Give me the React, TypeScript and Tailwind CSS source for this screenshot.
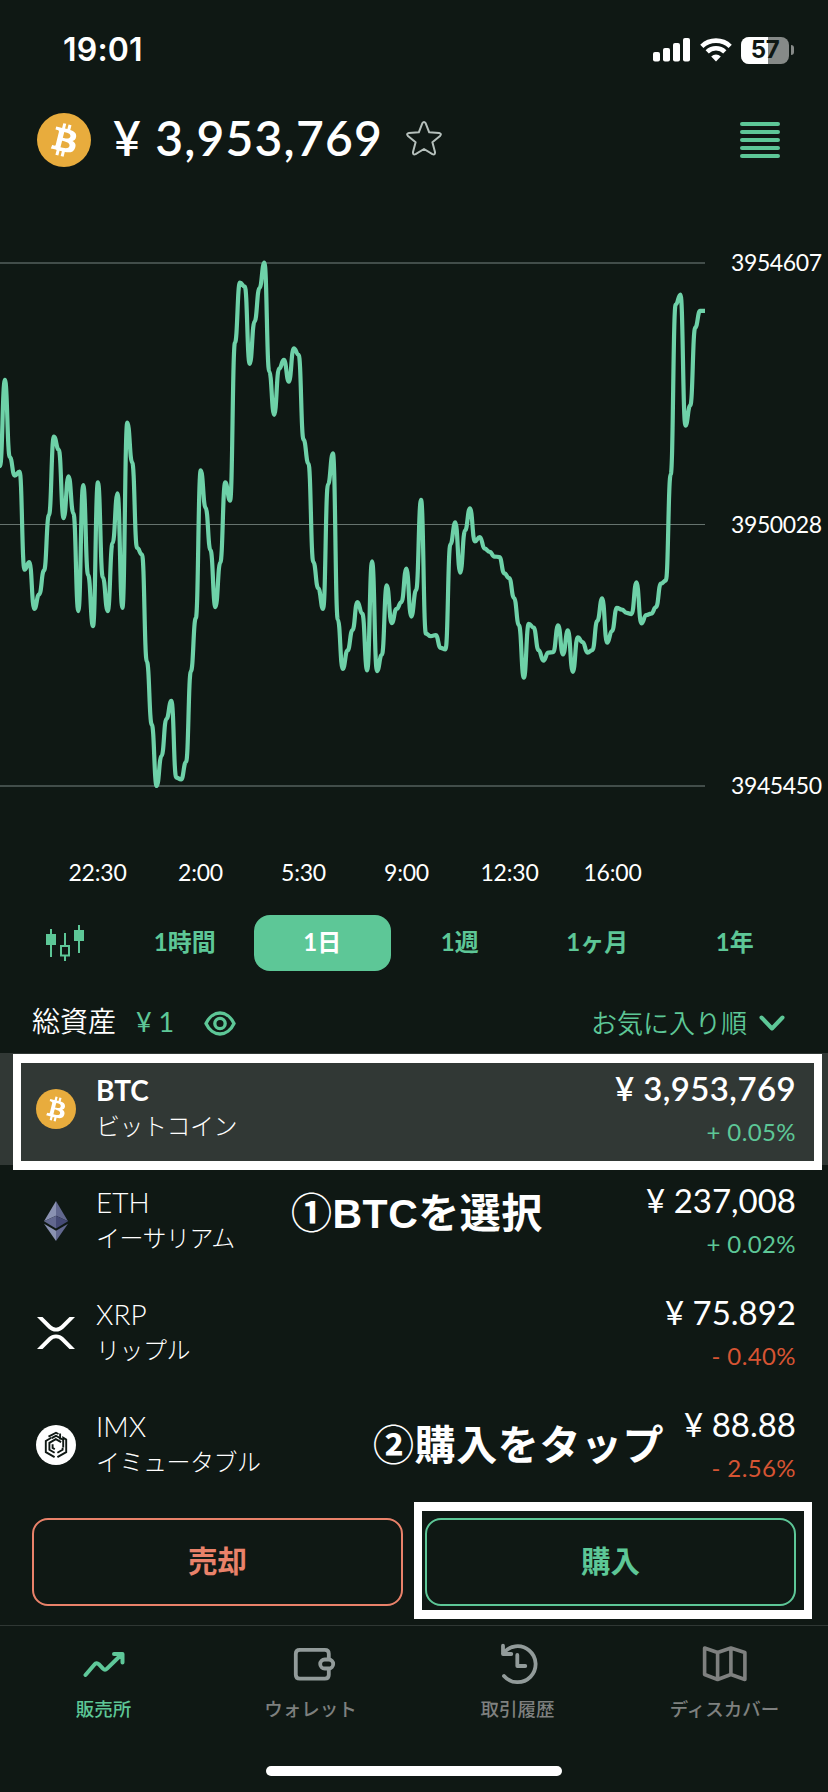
import React from 'react';

// one sample every ten minutes, measured down from the top of the plot
const SAMPLES = [
  622, 385, 597, 648, 637, 907, 886, 1015, 975, 909, 757, 541, 577, 765, 650, 752, 1021, 674, 922, 1062,
  667, 928, 1021, 834, 697, 1012, 502, 612, 847, 865, 1160, 1333, 1502, 1419, 1317, 1268, 1479, 1484, 1436, 1186,
  1040, 634, 737, 854, 1010, 887, 667, 717, 282, 117, 128, 341, 224, 132, 62, 362, 481, 354, 330, 390,
  298, 316, 549, 615, 886, 958, 1015, 672, 587, 1044, 1180, 1129, 1073, 996, 1028, 1184, 884, 1186, 1141, 950,
  1054, 1015, 996, 904, 1036, 963, 715, 1083, 1090, 1087, 1122, 1126, 837, 777, 915, 799, 738, 829, 817, 849,
  858, 871, 872, 917, 930, 985, 1060, 1204, 1056, 1066, 1128, 1157, 1135, 1134, 1060, 1140, 1074, 1188, 1093, 1106,
  1135, 1128, 1048, 986, 1108, 1076, 1012, 1017, 1026, 1029, 942, 1055, 1032, 1028, 1010, 945, 937, 645, 178, 150,
  511, 455, 241, 195, 195,
];

const STEP = 705 / 144;
const SCALE = 2.751;

const linePath = SAMPLES.map((v, i) => {
  const x = i * STEP;
  const y = v / SCALE;
  if (i === 0) return `M${x} ${y}`;
  const mid = x - STEP / 2;
  return `C${mid} ${SAMPLES[i - 1] / SCALE} ${mid} ${y} ${x} ${y}`;
}).join('');

const TIMES = ['22:30', '2:00', '5:30', '9:00', '12:30', '16:00'];
const PRICES = ['3954607', '3950028', '3945450'];
const RANGES = ['1時間', '1日', '1週', '1ヶ月', '1年'];

const BtcIcon = ({ className }: { className: string }) => (
  <svg viewBox="0 0 32 32" className={className}>
    <circle cx="16" cy="16" r="16" fill="#e8ac3d" />
    <path
      fill="#fff"
      d="M23.189 14.02c.314-2.096-1.283-3.223-3.465-3.975l.708-2.84-1.728-.43-.69 2.765c-.454-.114-.92-.22-1.385-.326l.695-2.783L15.596 6l-.708 2.839c-.376-.086-.746-.17-1.104-.26l.002-.009-2.384-.595-.46 1.846s1.283.294 1.256.312c.7.175.826.638.805 1.006l-.806 3.235c.048.012.11.03.18.057l-.183-.045-1.13 4.532c-.086.212-.303.531-.793.41.018.025-1.256-.313-1.256-.313l-.858 1.978 2.25.561c.418.105.828.215 1.231.318l-.715 2.872 1.727.43.708-2.84c.472.127.93.245 1.378.357l-.706 2.828 1.728.43.715-2.866c2.948.558 5.164.333 6.097-2.333.752-2.146-.037-3.385-1.588-4.192 1.13-.26 1.98-1.003 2.207-2.538zm-3.95 5.538c-.533 2.147-4.148.986-5.32.695l.95-3.805c1.172.293 4.929.872 4.37 3.11zm.535-5.569c-.487 1.953-3.495.96-4.47.717l.86-3.45c.975.243 4.118.696 3.61 2.733z"
    />
  </svg>
);

const EthIcon = () => (
  <svg viewBox="0 0 24 40" className="h-10 w-6">
    <path fill="#8a92b2" d="M12 0v14.8L0 20.3z" />
    <path fill="#62688f" d="M12 0v14.8l12 5.5z" />
    <path fill="#62688f" d="M12 14.8v12.6L0 20.3z" />
    <path fill="#454a75" d="M12 14.8v12.6l12-7.1z" />
    <path fill="#8a92b2" d="M12 29.8V40L0 22.7z" />
    <path fill="#62688f" d="M12 29.8V40l12-17.3z" />
  </svg>
);

const XrpIcon = () => (
  <svg viewBox="0 0 38 32" className="h-8 w-[38px]">
    <path fill="#fff" d="M0 0h5.5l8.6 8.6a6.9 6.9 0 0 0 9.8 0L32.5 0H38L26.6 11.4a10.8 10.8 0 0 1-15.2 0z" />
    <path fill="#fff" d="M0 32h5.5l8.6-8.6a6.9 6.9 0 0 1 9.8 0l8.6 8.6H38L26.6 20.6a10.8 10.8 0 0 0-15.2 0z" />
  </svg>
);

const ImxIcon = () => (
  <svg viewBox="0 0 40 40" className="size-10">
    <circle cx="20" cy="20" r="20" fill="#fff" />
    <g fill="none" stroke="#0f1814" strokeWidth="1.9">
      <path d="M18.6 32.2l-8.8-5V16l5.5-3.2" />
      <path d="M18.6 27.7l-5.2-3v-6.800l6.400-3.700 5.300 3" />
      <path d="M21.4 32.2l8.8-5V14.600l-3-1.800v9.700" />
      <path d="M12.5 11.700L20 7.700 22.500 9" />
      <path d="M15.6 13.200l4.400-2.400 7 4" />
      <path d="M21.4 27.700l5.200-3v-2" />
      <path d="M18.8 24.200l-2.200-1.300v-3.600" />
      <path d="M24.1 8.500v6" />
    </g>
  </svg>
);

const COINS = [
  { code: 'BTC', name: 'ビットコイン', price: '3,953,769', change: '+ 0.05%', icon: <BtcIcon className="size-10" />, selected: true },
  { code: 'ETH', name: 'イーサリアム', price: '237,008', change: '+ 0.02%', icon: <EthIcon /> },
  { code: 'XRP', name: 'リップル', price: '75.892', change: '- 0.40%', icon: <XrpIcon /> },
  { code: 'IMX', name: 'イミュータブル', price: '88.88', change: '- 2.56%', icon: <ImxIcon /> },
];

const StatusBar = () => (
  <div className="flex h-25 items-center justify-between pl-[63px] pr-[34px]">
    <span className="font-['Inter',sans-serif] text-[32px] font-semibold tracking-[0.2px]">19:01</span>
    <div className="flex items-center">
      <svg viewBox="0 0 38 24" className="h-6 w-[38px]" fill="#fff">
        <rect x="0" y="14" width="7" height="9.5" rx="2" />
        <rect x="10" y="10" width="7" height="13.5" rx="2" />
        <rect x="20" y="5" width="7" height="18.5" rx="2" />
        <rect x="30" y="0" width="7" height="23.5" rx="2" />
      </svg>
      <svg viewBox="0 0 32 24" className="ml-[9px] h-6 w-8" fill="none" stroke="#fff" strokeWidth="4.6">
        <path d="M1.8 8.3a20.5 20.5 0 0 1 28.4 0" />
        <path d="M7.2 13.8a12.7 12.7 0 0 1 17.6 0" />
        <path d="M16 23.5l-4.800-5a7 7 0 0 1 9.600 0z" fill="#fff" stroke="none" />
      </svg>
      <div className="relative ml-[9px] flex h-[27px] w-12 items-center justify-center overflow-hidden rounded-[8px] bg-[#868a88]">
        <div className="absolute inset-y-0 left-0 w-[27px] bg-white" />
        <span className="relative font-['Inter',sans-serif] text-[24px] font-bold leading-none tracking-[-0.5px] text-[#0f1814]">57</span>
      </div>
      <div className="ml-0.5 h-2.5 w-[3px] rounded-r-full bg-[#868a88]" />
    </div>
  </div>
);

const Chart = () => (
  <div className="mt-[60px] flex h-[570px]">
    <svg viewBox="0 0 705 570" className="h-[570px] w-[705px] shrink-0">
      <path d="M0 23H705M0 546H705" stroke="#424d4a" strokeWidth="2" />
      <path d="M0 284.5H705" stroke="#66736e" strokeWidth="1" />
      <path d={linePath} fill="none" stroke="#6ed1a8" strokeWidth="4.200" strokeLinejoin="round" />
    </svg>
    <div className="flex flex-col justify-between pb-[10px] pl-[26px] pt-[7px] text-[23px] leading-[30px] tracking-[-0.4px]">
      {PRICES.map((p) => (
        <span key={p}>{p}</span>
      ))}
    </div>
  </div>
);

const NAV = [
  {
    label: '販売所',
    color: 'text-[#5dc797]',
    icon: (
      <svg viewBox="0 0 42 42" className="size-[42px]" fill="none" stroke="#5ec799" strokeWidth="4" strokeLinecap="round" strokeLinejoin="round">
        <path d="M2.5 32l9-10.500q2-2.500 4.300-.3l4.200 4.500q2 2 4 0L39 11M31 11h8.500v8.500" />
      </svg>
    ),
  },
  {
    label: 'ウォレット',
    color: 'text-[#7e807f]',
    icon: (
      <svg viewBox="0 0 42 42" className="size-[42px] overflow-visible" fill="none" stroke="#929b9a" strokeWidth="3.8">
        <path d="M38.8 15.500v-4.700q0-4-4-4h-25q-4 0-4 4v20.900q0 4 4 4h25q4 0 4-4v-5" />
        <rect x="30.2" y="16.5" width="13" height="9" rx="4.5" />
      </svg>
    ),
  },
  {
    label: '取引履歴',
    color: 'text-[#7e807f]',
    icon: (
      <svg viewBox="0 0 42 42" className="size-[42px]" fill="none" stroke="#929b9a" strokeWidth="3.8" strokeLinecap="round" strokeLinejoin="round">
        <path d="M6 10.700A18 18 0 1 1 7 33M6 2.700v8.300h8.300M20.300 12v11h8" />
      </svg>
    ),
  },
  {
    label: 'ディスカバー',
    color: 'text-[#7e807f]',
    icon: (
      <svg viewBox="0 0 46 42" className="h-[42px] w-[46px]" fill="none" stroke="#7e807f" strokeWidth="3.6" strokeLinejoin="round">
        <path d="M2.600 5l13 4.500L28.900 5l14 4.500v27l-14-5-13.300 5-13-5zM15.600 9.500v27M28.900 5v26.500" />
      </svg>
    ),
  },
];

export default function App() {
  return (
    <div className="relative flex h-[1792px] w-[828px] flex-col overflow-hidden bg-[#0f1814] font-['Lato','Noto_Sans_CJK_JP',sans-serif] text-white">
      <StatusBar />

      <header className="flex h-20 items-center pl-[37px] pr-12">
        <BtcIcon className="size-[54px]" />
        <h1 className="mb-1 ml-[22px] whitespace-pre text-[48px] font-semibold leading-none tracking-[1.2px]">¥ 3,953,769</h1>
        <svg viewBox="0 0 36 36" className="mb-[3px] ml-[23px] size-9" fill="none" stroke="#b5bfbb" strokeWidth="2" strokeLinejoin="round">
          <path d="M16.300 2.300q1.700-2.600 3.400 0l3.500 9 9.900.7q3 .6.900 3l-7.600 6.300 2.600 9.800q.2 3.300-2.600 2L18 28l-8.400 5.100q-2.800 1.300-2.600-2l2.600-9.800L2 15q-2.100-2.400.9-3l9.900-.7z" />
        </svg>
        <div className="ml-auto flex w-10 flex-col gap-1">
          {[0, 1, 2, 3, 4].map((n) => (
            <div key={n} className="h-1 rounded-full bg-[#5dc797]" />
          ))}
        </div>
      </header>

      <Chart />

      <div className="mt-[47px] flex h-[30px] pl-[46px] text-[23px] leading-[30px] tracking-[-0.2px]">
        {TIMES.map((t) => (
          <span key={t} className="w-[103px] text-center">{t}</span>
        ))}
      </div>

      <div className="mt-7 flex h-14 items-center pl-[45px] pr-[24px]">
        <svg viewBox="0 0 40 36" className="mr-[31px] h-9 w-10 shrink-0" fill="#5dc797">
          <path d="M5 4h2v28H5zM1 9h10v11H1zM19 8h2v12h-2zM19 31h2v5h-2zM33 0h2v28h-2zM29 5h10v11H29z" />
          <rect x="16" y="21" width="8" height="9.5" fill="none" stroke="#5dc797" strokeWidth="2" />
        </svg>
        {RANGES.map((r) => (
          <div
            key={r}
            className={`flex h-14 w-[137.5px] shrink-0 items-center justify-center rounded-2xl pb-0.5 text-[24px] font-bold ${
              r === '1日' ? 'bg-[#5dc797] text-white' : 'text-[#5dc797]'
            }`}
          >
            {r}
          </div>
        ))}
      </div>

      <div className="mt-6 flex h-14 items-center px-8 text-[#5dc797]">
        <span className="mb-1 text-[28px] font-[350] text-white">総資産</span>
        <span className="mb-0.5 ml-5 text-[27px]">¥ 1</span>
        <svg viewBox="0 0 32 25" className="ml-[30px] h-[25px] w-8" fill="none" stroke="#5dc797" strokeWidth="3.3">
          <path d="M2 12.500C5 6 10.500 2 16 2s11 4 14 10.500C27 19 21.500 23 16 23S5 19 2 12.500z" />
          <circle cx="16" cy="12.5" r="5.2" />
        </svg>
        <span className="ml-auto text-[26px] font-[350]">お気に入り順</span>
        <svg viewBox="0 0 26 16" className="ml-3 mr-[11px] h-4 w-[26px]" fill="none" stroke="#5dc797" strokeWidth="4" strokeLinecap="round" strokeLinejoin="round">
          <path d="M2.500 2.500L13 13.500 23.500 2.500" />
        </svg>
      </div>

      <div className="relative mt-0.5">
        {COINS.map((c) => (
          <div key={c.code} className={`flex h-28 items-center pl-9 pr-8 ${c.selected ? 'bg-[#313835]' : ''}`}>
            <div className="flex w-10 justify-center">{c.icon}</div>
            <div className="mb-0.5 ml-5 flex flex-col">
              <span className={`text-[28px] leading-9 ${c.selected ? 'font-bold' : 'font-light'}`}>{c.code}</span>
              <span className="text-[24px] font-light leading-9 tracking-[-0.5px]">{c.name}</span>
            </div>
            <div className="ml-auto flex flex-col text-right">
              <span className={`text-[33px] leading-10 ${c.selected ? 'font-semibold tracking-[0.4px]' : 'font-normal'}`}>¥ {c.price}</span>
              <span className={`mt-1.5 text-[24px] leading-9 tracking-[0.4px] ${c.change[0] === '+' ? 'text-[#5dc797]' : 'text-[#d65433]'}`}>
                {c.change}
              </span>
            </div>
          </div>
        ))}
        {/* tutorial callouts */}
        <div className="absolute left-[13px] top-px h-[116px] w-[809px] border-x-8 border-y-9 border-white" />
        <div className="absolute left-[291px] top-[133px] whitespace-nowrap font-['Liberation_Sans','Noto_Sans_CJK_JP',sans-serif] text-[41px] font-bold leading-[56px] tracking-[0.5px]">
          ①BTCを選択
        </div>
        <div className="absolute left-[373px] top-[365px] whitespace-nowrap font-['Liberation_Sans','Noto_Sans_CJK_JP',sans-serif] text-[41px] font-bold leading-[56px] tracking-[0.6px]">
          ②購入をタップ
        </div>
      </div>

      <div className="relative mt-[17px] flex gap-[22px] px-8 text-[29.5px] font-bold">
        <button className="h-22 flex-1 rounded-2xl border-2 border-[#e9826a] pb-0.5 text-[#e9826a]">売却</button>
        <button className="h-22 flex-1 rounded-2xl border-2 border-[#5dc797] pb-0.5 text-[#5dc797]">購入</button>
        <div className="absolute -top-4 left-[414px] h-[117px] w-[398px] border-x-8 border-y-9 border-white" />
      </div>

      <nav className="mt-[19px] flex border-t border-[#2f3734] pt-[17px]">
        {NAV.map((n) => (
          <div key={n.label} className={`flex w-[207px] flex-col items-center ${n.color}`}>
            {n.icon}
            <span className="mt-2.5 text-[18.5px] font-medium leading-7">{n.label}</span>
          </div>
        ))}
      </nav>

      <div className="mx-auto mt-[43px] h-2.5 w-[296px] rounded-full bg-white" />
    </div>
  );
}
